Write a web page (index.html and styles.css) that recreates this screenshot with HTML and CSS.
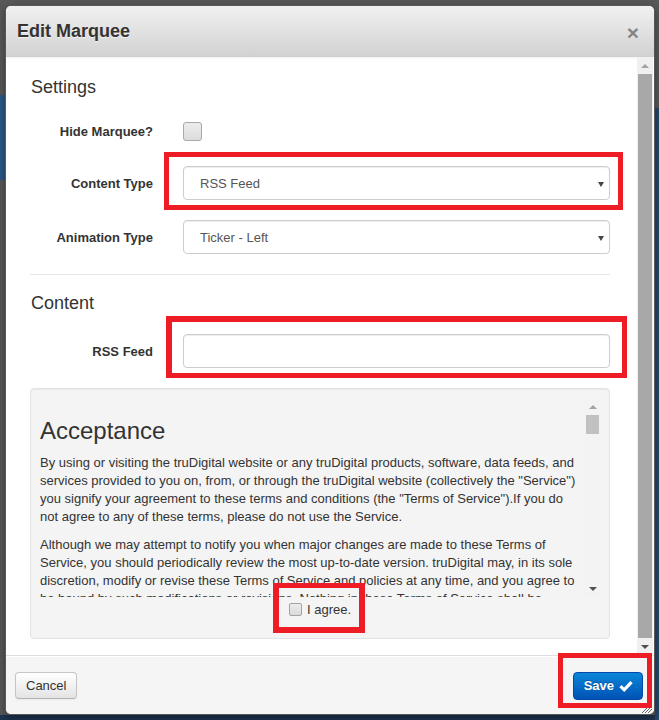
FILE: index.html
```html
<!DOCTYPE html>
<html lang="en">
<head>
<meta charset="utf-8">
<title>Edit Marquee</title>
<link rel="stylesheet" href="styles.css">
</head>
<body>
<div class="modal">
  <div class="modal-header">
    <h3 class="modal-title">Edit Marquee</h3>
    <span class="close">&times;</span>
  </div>
  <div class="modal-main">
    <div class="modal-body">
      <h4 class="legend legend-first">Settings</h4>
      <div class="form-row row-hide">
        <label class="control-label">Hide Marquee?</label>
        <div class="controls"><span class="checkbox-lg"></span></div>
      </div>
      <div class="form-row row-type">
        <label class="control-label">Content Type</label>
        <div class="controls">
          <div class="select"><span class="select-text">RSS Feed</span><span class="caret"></span></div>
        </div>
      </div>
      <div class="form-row row-anim">
        <label class="control-label">Animation Type</label>
        <div class="controls">
          <div class="select"><span class="select-text">Ticker - Left</span><span class="caret"></span></div>
        </div>
      </div>
      <div class="divider"></div>
      <h4 class="legend legend-second">Content</h4>
      <div class="form-row row-rss">
        <label class="control-label">RSS Feed</label>
        <div class="controls"><div class="input"></div></div>
      </div>
      <div class="well">
        <div class="terms">
          <div class="terms-text">
            <h2 class="terms-title">Acceptance</h2>
            <p>By using or visiting the truDigital website or any truDigital products, software, data feeds, and services provided to you on, from, or through the truDigital website (collectively the "Service") you signify your agreement to these terms and conditions (the "Terms of Service").If you do not agree to any of these terms, please do not use the Service.</p>
            <p>Although we may attempt to notify you when major changes are made to these Terms of Service, you should periodically review the most up-to-date version. truDigital may, in its sole discretion, modify or revise these Terms of Service and policies at any time, and you agree to be bound by such modifications or revisions. Nothing in these Terms of Service shall be deemed to confer any third-party rights or benefits.</p>
          </div>
          <div class="sb sb-inner">
            <div class="sb-btn"><span class="tri-up light"></span></div>
            <div class="sb-thumb-inner"></div>
            <div class="sb-fill"></div>
            <div class="sb-btn"><span class="tri-down"></span></div>
          </div>
        </div>
        <div class="agree">
          <span class="checkbox-sm"></span>
          <span class="agree-text">I agree.</span>
        </div>
      </div>
    </div>
    <div class="sb sb-outer">
      <div class="sb-btn"><span class="tri-up light"></span></div>
      <div class="sb-thumb-outer"></div>
      <div class="sb-btn"><span class="tri-down"></span></div>
    </div>
  </div>
  <div class="modal-footer">
    <button class="btn btn-default">Cancel</button>
    <button class="btn btn-primary">Save
      <svg class="check" width="14" height="12" viewBox="0 0 14 12"><path d="M1.5 6.2 L5.2 9.8 L12.5 2.2" fill="none" stroke="#fff" stroke-width="3.2" stroke-linejoin="miter"/></svg>
    </button>
  </div>
  <svg class="resize" width="11" height="8" viewBox="0 0 11 8"><path d="M1 8 L8 1 M4 8 L11 1 M7 8 L11 4" stroke="#666" stroke-width="1"/></svg>
</div>
<div class="mark mark-1"></div>
<div class="mark mark-2"></div>
<div class="mark mark-3"></div>
<div class="mark mark-4"></div>
</body>
</html>
```

FILE: styles.css
```css
html, body {
  margin: 0;
  padding: 0;
  width: 659px;
  height: 720px;
  overflow: hidden;
}
body {
  position: relative;
  font-family: "Liberation Sans", Arial, sans-serif;
  color: #333;
  background:
    linear-gradient(#2d5886, #2d5886) 0 95px / 5px 85px no-repeat,
    linear-gradient(#26466a, #26466a) right 0 top 108px / 4px 612px no-repeat,
    linear-gradient(#1d3451, #1d3451) 0 715px / 100% 5px no-repeat,
    #585858;
}
.modal {
  position: relative;
  box-sizing: border-box;
  margin: 5px 0 0 5px;
  width: 650px;
  height: 710px;
  border: 1px solid rgba(0, 0, 0, 0.65);
  border-radius: 6px;
  background: #fff;
  display: flex;
  flex-direction: column;
  overflow: hidden;
  box-shadow: 0 3px 9px rgba(0, 0, 0, 0.4);
}
.modal-header {
  height: 51px;
  flex: none;
  box-sizing: border-box;
  display: flex;
  align-items: center;
  justify-content: space-between;
  padding: 0 15px 0 11px;
  background: linear-gradient(#f1f1f1, #d2d2d2);
  border-bottom: 1px solid #cfcfcf;
  box-shadow: 0 1px 2px rgba(0, 0, 0, 0.06);
}
.modal-title {
  margin: 0;
  font-size: 18px;
  font-weight: bold;
  color: #333;
  line-height: 20px;
  text-shadow: 0 1px 0 rgba(255, 255, 255, 0.6);
}
.close {
  font-size: 21px;
  font-weight: bold;
  line-height: 20px;
  color: #858585;
  margin-top: 3px;
}
.modal-main {
  flex: 1;
  display: flex;
  min-height: 0;
}
.modal-body {
  flex: 1;
  padding: 0 27px 0 24px;
  overflow: hidden;
}
.legend {
  margin: 0;
  font-size: 18px;
  font-weight: normal;
  line-height: 20px;
  color: #333;
}
.legend-first { margin-top: 20px; padding-left: 1px; }
.legend-second { margin-top: 18px; padding-left: 1px; }
.form-row {
  display: grid;
  grid-template-columns: 123px 1fr;
  column-gap: 30px;
  align-items: center;
  height: 34px;
}
.row-hide { margin-top: 17px; }
.row-type { margin-top: 18px; }
.row-anim { margin-top: 20px; }
.row-rss { margin-top: 21px; }
.control-label {
  text-align: right;
  font-size: 13px;
  font-weight: bold;
  color: #333;
}
.controls {
  display: flex;
  align-items: center;
  height: 34px;
}
.checkbox-lg {
  display: block;
  box-sizing: border-box;
  width: 19px;
  height: 19px;
  border: 1px solid #a9a9a9;
  border-radius: 3px;
  background: linear-gradient(#ececec, #dcdcdc);
}
.select, .input {
  position: relative;
  box-sizing: border-box;
  width: 100%;
  height: 34px;
  border: 1px solid #cdcdcd;
  border-radius: 4px;
  background: #fff;
  box-shadow: inset 0 1px 1px rgba(0, 0, 0, 0.075);
  display: flex;
  align-items: center;
}
.select-text {
  padding-left: 16px;
  font-size: 13px;
  color: #555;
}
.caret {
  position: absolute;
  right: 5px;
  top: 15px;
  width: 0;
  height: 0;
  border-left: 3.5px solid transparent;
  border-right: 3.5px solid transparent;
  border-top: 5px solid #444;
}
.divider {
  margin-top: 20px;
  height: 1px;
  background: #e5e5e5;
}
.well {
  margin-top: 20px;
  box-sizing: border-box;
  height: 251px;
  border: 1px solid #e3e3e3;
  border-radius: 4px;
  background: #f4f4f4;
  box-shadow: inset 0 1px 1px rgba(0, 0, 0, 0.05);
  padding: 9px 8px 0 9px;
}
.terms {
  display: flex;
  height: 199px;
}
.terms-text {
  flex: 1;
  overflow: hidden;
  font-size: 13px;
  line-height: 18px;
  color: #333;
}
.terms-title {
  margin: 20px 0 10px;
  font-size: 24px;
  font-weight: normal;
  line-height: 26px;
  color: #333;
}
.terms-text p {
  margin: 0 0 10px;
}
.sb {
  flex: none;
  display: flex;
  flex-direction: column;
  background: #f1f1f1;
}
.sb-inner {
  width: 17px;
  background: #f3f3f3;
}
.sb-outer {
  width: 16px;
  margin-right: 1px;
  background: #f0f0f0;
}
.sb-btn {
  height: 17px;
  flex: none;
  display: flex;
  align-items: center;
  justify-content: center;
}
.tri-up {
  width: 0;
  height: 0;
  border-left: 4px solid transparent;
  border-right: 4px solid transparent;
  border-bottom: 4px solid #505050;
}
.tri-up.light { border-bottom-color: #a3a3a3; }
.tri-down {
  width: 0;
  height: 0;
  border-left: 4px solid transparent;
  border-right: 4px solid transparent;
  border-top: 4px solid #505050;
}
.sb-thumb-inner {
  height: 19px;
  margin: 0 2px;
  background: #c1c1c1;
}
.sb-fill { flex: 1; }
.sb-thumb-outer {
  flex: 1;
  margin: 0 1px;
  background: #a8a8a8;
}
.agree {
  margin-top: 3px;
  height: 18px;
  display: flex;
  align-items: center;
  justify-content: center;
  gap: 5px;
  padding-right: 1px;
}
.checkbox-sm {
  display: block;
  box-sizing: border-box;
  width: 13px;
  height: 13px;
  border: 1px solid #a3a3a3;
  border-radius: 2px;
  background: linear-gradient(#ededed, #dadada);
}
.agree-text {
  font-size: 13px;
  color: #333;
}
.modal-footer {
  flex: none;
  height: 59px;
  box-sizing: border-box;
  border-top: 1px solid #dedede;
  background: #f5f5f5;
  box-shadow: inset 0 1px 0 #fff;
  display: flex;
  align-items: center;
  justify-content: space-between;
  padding: 0 10px 0 9px;
}
.btn {
  font-family: "Liberation Sans", Arial, sans-serif;
  font-size: 13px;
  border-radius: 4px;
  display: inline-flex;
  align-items: center;
  box-sizing: border-box;
  margin: 0;
  cursor: pointer;
}
.btn-default {
  height: 27px;
  padding: 0 10px;
  color: #333;
  border: 1px solid #c6c6c6;
  border-bottom-color: #b3b3b3;
  background: linear-gradient(#ffffff, #e4e4e4);
  box-shadow: inset 0 1px 0 rgba(255, 255, 255, 0.2), 0 1px 2px rgba(0, 0, 0, 0.05);
}
.btn-primary {
  height: 28px;
  padding: 0 9px 0 10px;
  gap: 5px;
  color: #fff;
  font-weight: bold;
  border: 1px solid #0449a8;
  background: linear-gradient(#0b86d8, #0052b6);
  text-shadow: 0 -1px 0 rgba(0, 0, 0, 0.25);
  margin-right: 1px;
  margin-top: 1px;
}
.check { display: block; }
.resize {
  position: absolute;
  right: 2px;
  bottom: 1px;
}
.mark {
  position: absolute;
  box-sizing: border-box;
  border: 5px solid #ee1c25;
}
.mark-1 { left: 164px; top: 152px; width: 459px; height: 58px; }
.mark-2 { left: 166px; top: 316px; width: 461px; height: 62px; border-width: 6px 5px 5px 6px; }
.mark-3 { left: 273px; top: 583px; width: 92px; height: 50px; border-width: 5px 6px 6px 6px; }
.mark-4 { left: 558px; top: 653px; width: 94px; height: 55px; }
```
